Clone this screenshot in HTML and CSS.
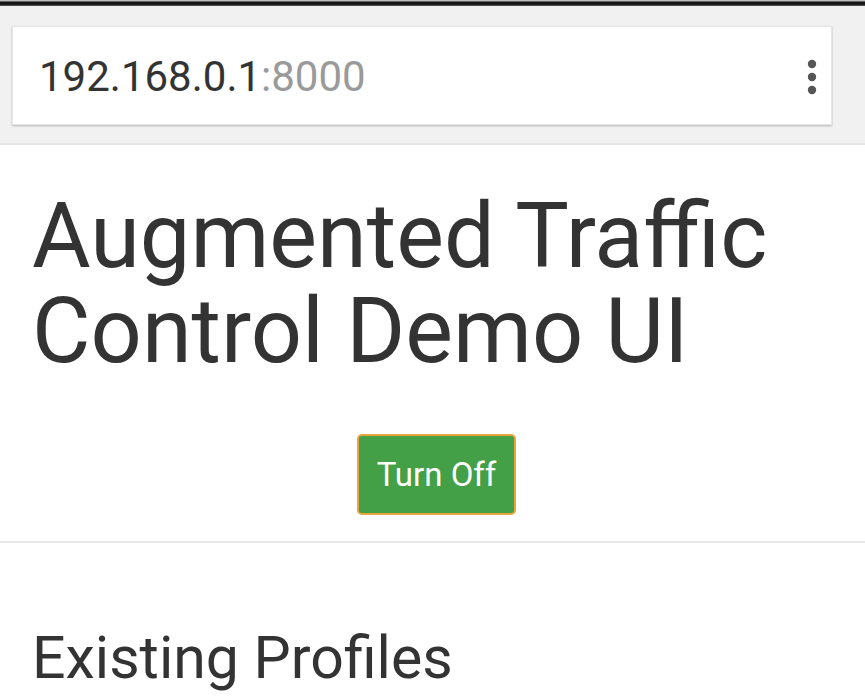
FILE: index.html
```html
<!DOCTYPE html>
<html>
<head>
<meta charset="utf-8">
<link rel="stylesheet" href="styles.css">
</head>
<body>
<div class="topbar"></div>
<div class="chrome">
  <div class="urlbox">
    <span class="url"><span class="host">192.168.0.1</span><span class="port">:8000</span></span>
    <svg class="menu" width="12" height="36" viewBox="0 0 12 36"><circle cx="6" cy="5" r="4.2" fill="#555"/><circle cx="6" cy="18" r="4.2" fill="#555"/><circle cx="6" cy="31" r="4.2" fill="#555"/></svg>
  </div>
</div>
<div class="page">
  <h1 class="title">Augmented Traffic Control Demo UI</h1>
  <div class="actions"><button class="btn-off">Turn Off</button></div>
</div>
<hr class="divider">
<div class="page">
  <h2 class="section">Existing Profiles</h2>
</div>
</body>
</html>
```
FILE: styles.css
```css
html, body { margin: 0; padding: 0; background: #fff; }
body { font-family: Roboto, "Noto Sans", sans-serif; color: #333; overflow: hidden; }
.topbar { height: 6px; background: linear-gradient(#bbb 0, #bbb 1px, #111 2px, #222 5px, #777 6px); }
.chrome { background: #f1f1f1; padding: 20px 33px 18px 12px; border-bottom: 2px solid #e4e4e4; }
.urlbox { background: #fff; height: 99px; display: flex; align-items: center; justify-content: space-between; padding: 2px 13px 0 26px; box-shadow: 0 1px 2px rgba(0,0,0,0.25); border: 1px solid #e6e6e6; box-sizing: border-box; }
.url { font-size: 42px; }
.host { color: #333; }
.port { color: #9a9a9a; }
.menu { display: block; }
.page { padding: 0 32px; }
.title { font-weight: 400; font-size: 90px; line-height: 95px; margin: 44px 0 0; color: #333; }
.actions { display: flex; justify-content: center; padding-left: 8px; margin-top: 55px; }
.btn-off { font-family: inherit; font-size: 33px; color: #fff; background: #43a047; border: 2px solid #e9a43c; border-radius: 5px; width: 159px; height: 81px; padding: 0; }
.divider { margin: 26px 0 0; border: 0; border-top: 2px solid #e6e6e6; }
.section { font-weight: 400; font-size: 59px; margin: 80px 0 0; color: #333; }
```
